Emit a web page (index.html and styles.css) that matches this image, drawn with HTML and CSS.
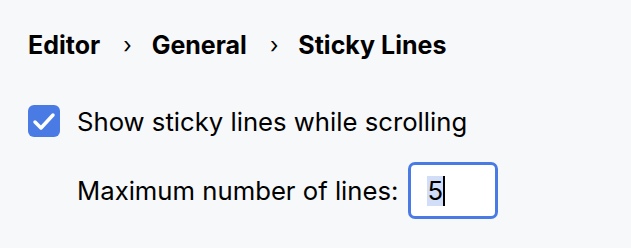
FILE: index.html
```html
<!DOCTYPE html>
<html lang="en">
<head>
    <meta charset="UTF-8">
    <title>Sticky Lines</title>
    <link rel="stylesheet" href="styles.css">
</head>
<body>
    <div class="settings">
        <div class="breadcrumb">
            <span>Editor</span>
            <span class="sep">›</span>
            <span>General</span>
            <span class="sep">›</span>
            <span>Sticky Lines</span>
        </div>

        <label class="check-row">
            <span class="checkbox">
                <svg width="32" height="32" viewBox="0 0 32 32">
                    <path d="M7 17 L13 23 L25 10" fill="none" stroke="white" stroke-width="3.5" stroke-linecap="round" stroke-linejoin="round"/>
                </svg>
            </span>
            <span>Show sticky lines while scrolling</span>
        </label>

        <div class="field-row">
            <span>Maximum number of lines:</span>
            <div class="num-input"><span class="sel">5</span><span class="caret"></span></div>
        </div>
    </div>
</body>
</html>
```

FILE: styles.css
```css
html, body {
    margin: 0;
    background-color: #f7f8fa;
}
body {
    font-family: Inter, "Noto Sans", sans-serif;
    color: #000;
}
.settings {
    padding: 24px 28px;
}
.breadcrumb {
    display: flex;
    align-items: center;
    gap: 20px;
    font-size: 25px;
    font-weight: 700;
    height: 42px;
}
.breadcrumb .sep {
    font-weight: 400;
    font-size: 22px;
    margin-left: 3px;
}
.check-row {
    display: flex;
    align-items: center;
    gap: 17px;
    margin-top: 39px;
    font-size: 25.7px;
}
.checkbox {
    width: 32px;
    height: 32px;
    border-radius: 6px;
    background-color: #4a7be5;
    display: flex;
}
.field-row {
    display: flex;
    align-items: center;
    gap: 10px;
    margin-top: 25px;
    margin-left: 49px;
    font-size: 25.7px;
}
.num-input {
    box-sizing: border-box;
    width: 90px;
    height: 57px;
    border: 3px solid #4a7be5;
    border-radius: 7px;
    background-color: #fff;
    display: flex;
    align-items: center;
    padding-left: 16px;
}
.sel {
    background-color: #d2ddf7;
    line-height: 30px;
}
.caret {
    width: 2px;
    height: 30px;
    background-color: #000;
}
```
